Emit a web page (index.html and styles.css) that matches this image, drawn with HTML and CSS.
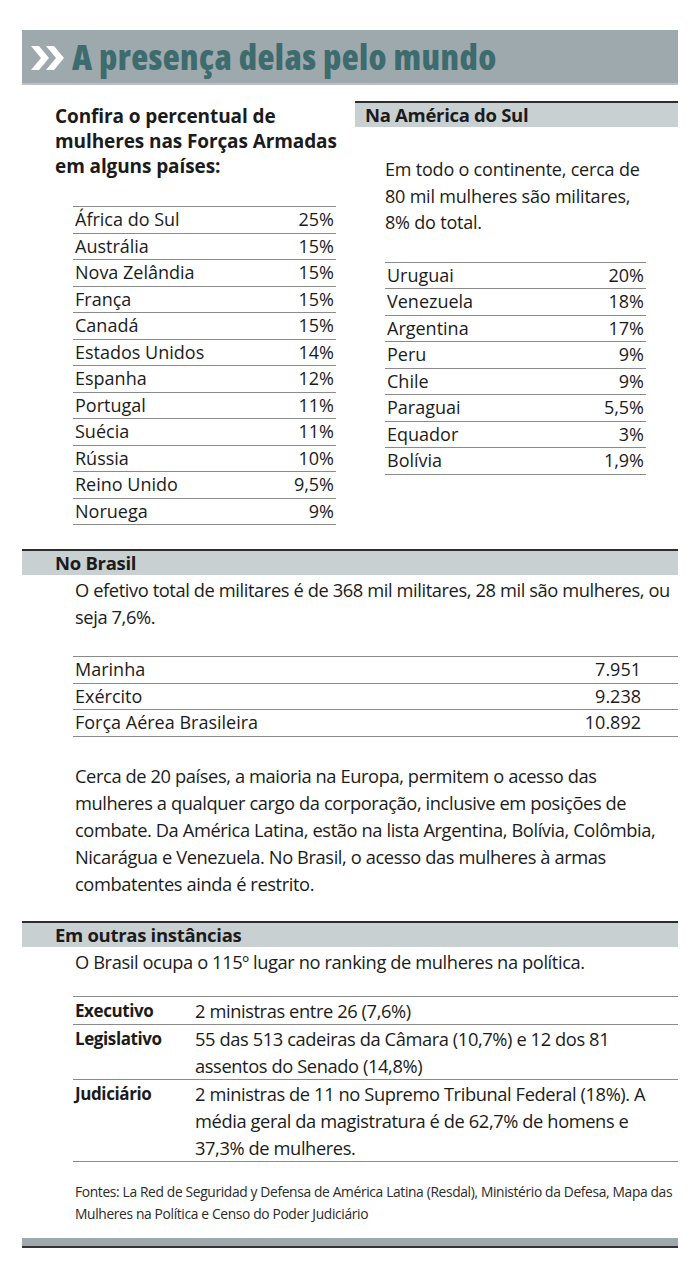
FILE: index.html
```html
<!DOCTYPE html>
<html lang="pt">
<head>
<meta charset="utf-8">
<link rel="stylesheet" href="styles.css">
</head>
<body>
<div class="page">
  <div class="banner">
    <svg class="chev" width="36" height="26" viewBox="0 0 36 26"><path d="M1 1h8l10 12-10 12H1l10-12z M16 1h8l10 12-10 12h-8l10-12z" fill="#fff"/></svg>
    <h1>A presença delas pelo mundo</h1>
  </div>

  <div class="top">
    <div class="col-left">
      <h2 class="lead">Confira o percentual de mulheres nas Forças Armadas em alguns países:</h2>
      <table class="data left-table">
        <tr><td>África do Sul</td><td>25%</td></tr>
        <tr><td>Austrália</td><td>15%</td></tr>
        <tr><td>Nova Zelândia</td><td>15%</td></tr>
        <tr><td>França</td><td>15%</td></tr>
        <tr><td>Canadá</td><td>15%</td></tr>
        <tr><td>Estados Unidos</td><td>14%</td></tr>
        <tr><td>Espanha</td><td>12%</td></tr>
        <tr><td>Portugal</td><td>11%</td></tr>
        <tr><td>Suécia</td><td>11%</td></tr>
        <tr><td>Rússia</td><td>10%</td></tr>
        <tr><td>Reino Unido</td><td>9,5%</td></tr>
        <tr><td>Noruega</td><td>9%</td></tr>
      </table>
    </div>
    <div class="col-right">
      <h3 class="sec-bar">Na América do Sul</h3>
      <p class="intro">Em todo o continente, cerca de 80 mil mulheres são militares, 8% do total.</p>
      <table class="data right-table">
        <tr><td>Uruguai</td><td>20%</td></tr>
        <tr><td>Venezuela</td><td>18%</td></tr>
        <tr><td>Argentina</td><td>17%</td></tr>
        <tr><td>Peru</td><td>9%</td></tr>
        <tr><td>Chile</td><td>9%</td></tr>
        <tr><td>Paraguai</td><td>5,5%</td></tr>
        <tr><td>Equador</td><td>3%</td></tr>
        <tr><td>Bolívia</td><td>1,9%</td></tr>
      </table>
    </div>
  </div>

  <section class="brasil">
    <h3 class="sec-bar wide">No Brasil</h3>
    <p class="body-text">O efetivo total de militares é de 368 mil militares, 28 mil são mulheres, ou seja 7,6%.</p>
    <table class="data br-table">
      <tr><td>Marinha</td><td>7.951</td></tr>
      <tr><td>Exército</td><td>9.238</td></tr>
      <tr><td>Força Aérea Brasileira</td><td>10.892</td></tr>
    </table>
    <p class="body-text para">Cerca de 20 países, a maioria na Europa, permitem o acesso das mulheres a qualquer cargo da corporação, inclusive em posições de combate. Da América Latina, estão na lista Argentina, Bolívia, Colômbia, Nicarágua e Venezuela. No Brasil, o acesso das mulheres à armas combatentes ainda é restrito.</p>
  </section>

  <section class="outras">
    <h3 class="sec-bar wide">Em outras instâncias</h3>
    <p class="body-text">O Brasil ocupa o 115º lugar no ranking de mulheres na política.</p>
    <table class="data pol-table">
      <tr><th>Executivo</th><td>2 ministras entre 26 (7,6%)</td></tr>
      <tr><th>Legislativo</th><td>55 das 513 cadeiras da Câmara (10,7%) e 12 dos 81 assentos do Senado (14,8%)</td></tr>
      <tr><th>Judiciário</th><td>2 ministras de 11 no Supremo Tribunal Federal (18%). A média geral da magistratura é de 62,7% de homens e 37,3% de mulheres.</td></tr>
    </table>
    <p class="sources">Fontes: La Red de Seguridad y Defensa de América Latina (Resdal), Ministério da Defesa, Mapa das Mulheres na Política e Censo do Poder Judiciário</p>
  </section>

  <div class="footer-bar"></div>
</div>
</body>
</html>
```

FILE: styles.css
```css
* { box-sizing: border-box; }
html, body { margin: 0; padding: 0; background: #fff; }
body {
  font-family: "Open Sans", "Roboto Condensed", sans-serif;
  font-stretch: 91%;
  color: #1b1b1b;
}
.page {
  width: 656px;
  margin-left: 22px;
  padding-top: 30px;
}
.banner {
  height: 55px;
  background: #9da9ad;
  border-bottom: 2px solid #b9c1c4;
  display: flex;
  align-items: center;
  padding-left: 8px;
  gap: 6px;
}
.chev { flex: none; margin-top: 2px; }
.banner h1 {
  margin: 0;
  font-size: 35px;
  line-height: 40px;
  font-weight: 800;
  font-stretch: 75%;
  letter-spacing: 0.4px;
  color: #3e6b6d;
}
.top {
  display: grid;
  grid-template-columns: 333px 323px;
  margin-top: 16px;
}
.col-left { padding-left: 33px; }
.lead {
  margin: 3px 0 0;
  font-size: 19px;
  line-height: 25px;
  font-weight: 700;
  letter-spacing: -0.1px;
  width: 282px;
}
.data {
  border-collapse: collapse;
  font-size: 18px;
}
.data td, .data th {
  padding: 0 2px;
  height: 26.5px;
  border-bottom: 1.5px solid #8a8a8a;
  vertical-align: middle;
  line-height: 25px;
  font-weight: 400;
}
.data tr:first-child td, .data tr:first-child th { border-top: 1.5px solid #8a8a8a; }
.data td:last-child { text-align: right; }
.left-table { margin-left: 18px; margin-top: 27px; width: 263px; }
.sec-bar {
  margin: 0;
  background: #c9d0d2;
  border-top: 2px solid #2c2c2c;
  font-size: 18.5px;
  font-weight: 700;
  letter-spacing: -0.3px;
  line-height: 24px;
  padding-left: 10px;
}
.intro {
  margin: 29px 0 0 30px;
  font-size: 18px;
  letter-spacing: -0.2px;
  line-height: 26.5px;
  width: 255px;
}
.right-table { margin-left: 30px; margin-top: 26px; width: 261px; }
.brasil { margin-top: 24px; }
.sec-bar.wide { padding-left: 33px; }
.body-text {
  margin: 1px 0 0 53px;
  font-size: 18.3px;
  letter-spacing: -0.4px;
  line-height: 27px;
}
.br-table { margin-left: 51px; margin-top: 26px; width: 605px; }
.br-table td:last-child { padding-right: 37px; }
.para { margin-top: 25px; }
.outras { margin-top: 24px; }
.pol-table { margin-left: 51px; margin-top: 21px; width: 605px; font-size: 18.3px; }
.pol-table th {
  text-align: left;
  font-weight: 700;
  width: 120px;
  vertical-align: top;
  line-height: 27px;
  font-size: 17px;
  letter-spacing: -0.4px;
}
.pol-table td {
  text-align: left !important;
  vertical-align: top;
  line-height: 27px;
  padding-right: 8px;
  letter-spacing: -0.4px;
}
.sources {
  margin: 19px 0 0 53px;
  font-size: 13.8px;
  letter-spacing: -0.35px;
  line-height: 22px;
  color: #2a2a2a;
}
.footer-bar {
  margin-top: 13px;
  height: 10px;
  background: #9da9ad;
  border-bottom: 2px solid #333;
}
```
